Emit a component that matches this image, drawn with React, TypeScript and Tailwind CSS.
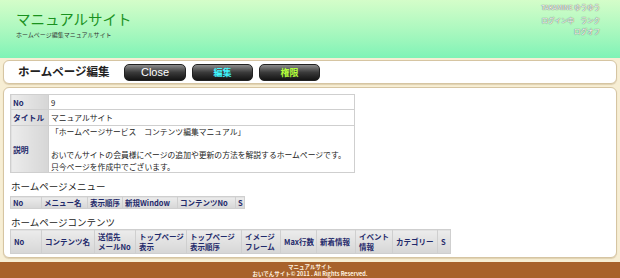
import React from "react";

const menuCols = [
  { label: "No", w: "w-[31px]" },
  { label: "メニュー名", w: "w-[46px]" },
  { label: "表示順序", w: "w-[35px]" },
  { label: "新規Window", w: "w-[55px]" },
  { label: "コンテンツNo", w: "w-[58px]" },
  { label: "S", w: "w-[9px]" },
];

const contentCols = [
  { label: ["No"], w: "w-[31px]" },
  { label: ["コンテンツ名"], w: "w-[53px]" },
  { label: ["送信先", "メールNo"], w: "w-[41px]" },
  { label: ["トップページ", "表示"], w: "w-[51px]" },
  { label: ["トップページ", "表示順序"], w: "w-[55px]" },
  { label: ["イメージ", "フレーム"], w: "w-[39px]" },
  { label: ["Max行数"], w: "w-[36px]" },
  { label: ["新着情報"], w: "w-[39px]" },
  { label: ["イベント", "情報"], w: "w-[37px]" },
  { label: ["カテゴリー"], w: "w-[45px]" },
  { label: ["S"], w: "w-[13px]" },
];

const th =
  "bg-linear-to-b from-[#ececec] to-[#d6d6d6] text-[#1f2a6b] font-semibold text-left align-middle border border-[#cfcfcf] p-0 pl-[2px] whitespace-nowrap overflow-hidden";

const btn =
  "h-[17px] rounded-[5px] border border-[#222] bg-linear-to-b from-[#8c8c8c] via-[#3a3a3a] to-[#151515] leading-none";

export default function App() {
  return (
    <div className="w-[620px] h-[278px] overflow-hidden font-['Noto_Sans_CJK_JP',sans-serif] bg-[#f7eed4]">
      {/* header */}
      <div className="h-[58px] bg-linear-to-b from-[#d4fdc9] to-[#7ef3b6] flex justify-between px-[16px]">
        <div className="pt-[9px]">
          <div className="text-[14.5px] leading-[20px] text-[#1a921f]">マニュアルサイト</div>
          <div className="text-[6px] leading-[8px] mt-[2px] text-[#333]">ホームページ編集マニュアルサイト</div>
        </div>
        <div className="pt-[2px] pr-[4px] text-right text-[6.5px] leading-[11px] text-white [text-shadow:0_0_1px_#666,0_0_1px_#666]">
          <div>TAKAMINE ゆうゆう</div>
          <div className="mt-[2px]">ログイン中　ランク</div>
          <div>ログオフ</div>
        </div>
      </div>

      <div className="px-[3px] pt-[2px]">
        {/* title bar */}
        <div className="h-[24px] bg-white border border-[#d6c5a2] rounded-[6px] shadow-[0_1px_1px_rgba(150,120,70,0.25)] flex items-center pl-[14px] gap-[6px]">
          <div className="text-[11.5px] font-bold text-[#222] w-[100px] leading-none">ホームページ編集</div>
          <button className={`${btn} w-[62px] text-white text-[11px] font-['Liberation_Sans',sans-serif]`}>Close</button>
          <button className={`${btn} w-[61px] text-[#3ff6ff] text-[9px] font-bold`}>編集</button>
          <button className={`${btn} w-[61px] text-[#b4ff3a] text-[9px] font-bold`}>権限</button>
        </div>

        {/* main panel */}
        <div className="mt-[3px] h-[171px] bg-white border border-[#d6c5a2] rounded-[6px] shadow-[0_1px_1px_rgba(150,120,70,0.25)] pl-[6px] pt-[6px]">
          <table className="w-[345px] table-fixed border-collapse text-[7.8px] leading-[11px] text-[#222]">
            <colgroup>
              <col className="w-[38px]" />
              <col />
            </colgroup>
            <tbody>
              <tr className="h-[15px]">
                <td className={`${th} bg-linear-to-r`}>No</td>
                <td className="border border-[#cfcfcf] p-0 px-[2px]">9</td>
              </tr>
              <tr className="h-[16px]">
                <td className={`${th} bg-linear-to-r`}>タイトル</td>
                <td className="border border-[#cfcfcf] p-0 px-[2px]">マニュアルサイト</td>
              </tr>
              <tr className="h-[46px]">
                <td className={`${th} bg-linear-to-r`}>説明</td>
                <td className="border border-[#cfcfcf] p-0 px-[2px] leading-[11.5px] whitespace-nowrap">
                  <div>「ホームページサービス　コンテンツ編集マニュアル」</div>
                  <div>&nbsp;</div>
                  <div>おいでんサイトの会員様にページの追加や更新の方法を解説するホームページです。</div>
                  <div>只今ページを作成中でございます。</div>
                </td>
              </tr>
            </tbody>
          </table>

          <div className="mt-[7px] text-[9.5px] leading-[13px] text-[#222] pl-[1px]">ホームページメニュー</div>
          <table className="mt-[3px] w-[234px] table-fixed border-collapse text-[7.5px] leading-[10px]">
            <colgroup>
              {menuCols.map((c) => (
                <col key={c.label} className={c.w} />
              ))}
            </colgroup>
            <thead>
              <tr className="h-[12px]">
                {menuCols.map((c) => (
                  <th key={c.label} className={th}>
                    {c.label}
                  </th>
                ))}
              </tr>
            </thead>
          </table>

          <div className="mt-[7px] text-[9.5px] leading-[13px] text-[#222] pl-[1px]">ホームページコンテンツ</div>
          <table className="w-[440px] table-fixed border-collapse text-[7.5px] leading-[10px]">
            <colgroup>
              {contentCols.map((c) => (
                <col key={c.label.join()} className={c.w} />
              ))}
            </colgroup>
            <thead>
              <tr className="h-[24px]">
                {contentCols.map((c) => (
                  <th key={c.label.join()} className={`${th} pl-[3px]`}>
                    {c.label.map((l) => (
                      <div key={l}>{l}</div>
                    ))}
                  </th>
                ))}
              </tr>
            </thead>
          </table>
        </div>
      </div>

      {/* footer */}
      <div className="mt-[4px] h-[16px] bg-[#a8622b] text-center text-[#fff3e0] text-[5.5px] leading-[6.5px] font-bold pt-[2px]">
        <div>マニュアルサイト</div>
        <div>おいでんサイト© 2011 . All Rights Reserved.</div>
      </div>
    </div>
  );
}
